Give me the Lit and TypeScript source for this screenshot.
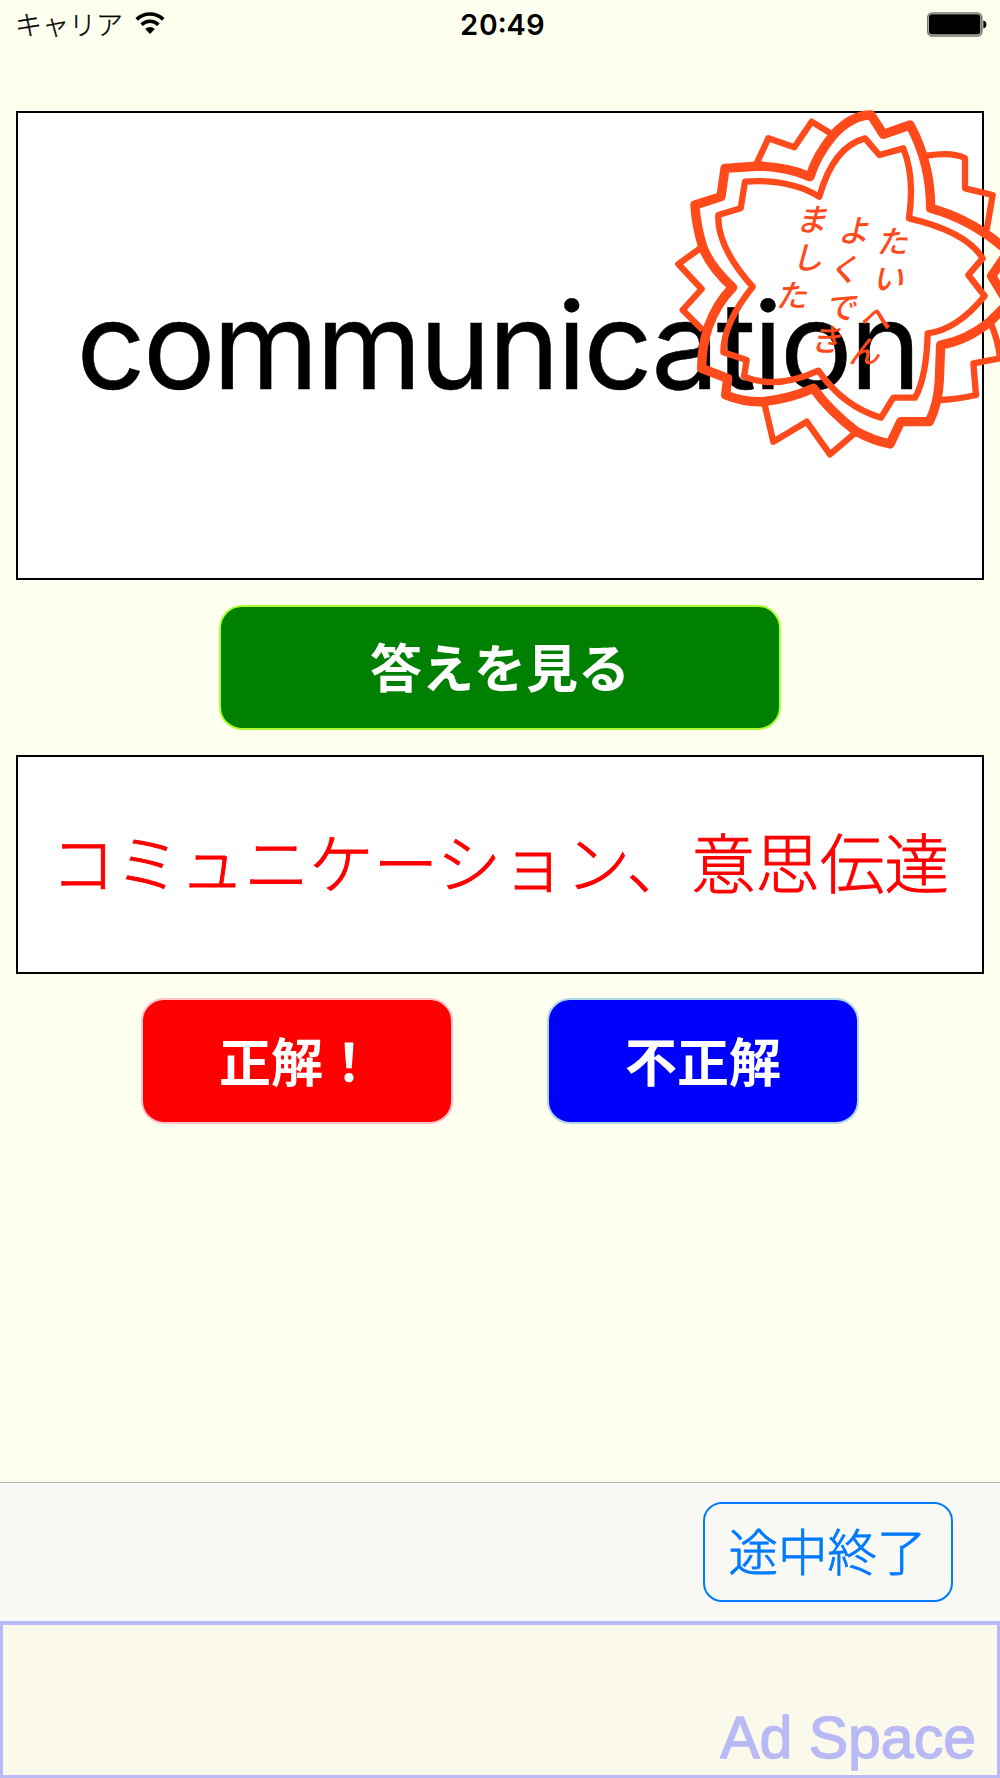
import { LitElement, css, html } from "lit";
import { customElement, property } from "lit/decorators.js";

@customElement("status-bar")
export class StatusBar extends LitElement {
  @property() carrier = "";
  @property() time = "";

  render() {
    return html`
      <div class="left">
        <span class="carrier">${this.carrier}</span>
        <svg class="wifi" width="30" height="22" viewBox="0 0 30 22">
          <path d="M1.7 7.4A19 19 0 0 1 28.3 7.4" />
          <path d="M6.6 12.7A12 12 0 0 1 23.4 12.7" />
          <path class="dot" d="M15 22L10.2 17A7 7 0 0 1 19.8 17Z" />
        </svg>
      </div>
      <div class="time">${this.time}</div>
      <div class="right">
        <svg width="60" height="26" viewBox="0 0 60 26">
          <rect class="shell" x="0.8" y="1" width="54" height="23" rx="4.5" />
          <rect x="2" y="2.2" width="51.4" height="20.4" rx="3" />
          <path d="M56.3 8.6A4 4 0 0 1 56.3 16.4Z" />
        </svg>
      </div>
    `;
  }

  static styles = css`
    :host {
      display: grid;
      grid-template-columns: 1fr auto 1fr;
      align-items: center;
      height: 50px;
      padding: 0 13px 0 15px;
    }
    svg {
      display: block;
    }
    .left {
      display: flex;
      align-items: center;
      gap: 12px;
    }
    .carrier {
      font-size: 27px;
      font-weight: 300;
      line-height: 48px;
      padding-bottom: 2px;
      -webkit-text-stroke: 0.3px #000;
    }
    .wifi {
      fill: none;
      stroke: #000;
      stroke-width: 3.6;
      margin-bottom: 4px;
    }
    .dot {
      fill: #000;
      stroke: none;
    }
    .time {
      font-family: Inter, sans-serif;
      font-size: 29px;
      font-weight: 600;
      line-height: 50px;
      letter-spacing: 0.5px;
      padding-left: 3px;
      font-feature-settings: "tnum", "case";
    }
    .right {
      justify-self: end;
    }
    .shell {
      fill: none;
      stroke: #77776f;
      stroke-width: 1.6;
    }
  `;
}

@customElement("sakura-stamp")
export class SakuraStamp extends LitElement {
  render() {
    return html`
      <svg width="340" height="370" viewBox="0 0 1020 1110">
        <path
          class="thick"
          d="M633 45Q575 45 520 105Q470 165 450 230Q390 203 300 198L195 205L183 290L105 315Q108 375 128 440Q150 500 218 562Q170 610 145 680Q125 740 125 805L203 835L197 885Q250 907 310 905Q390 897 460 865Q510 935 590 995Q640 1022 690 1032L722 965L808 965Q835 910 838 840L842 735Q920 722 990 665L1045 610L995 528L1045 455Q940 360 812 325Q812 190 750 75L670 103Z"
        />
        <path
          class="thin"
          d="M615 115Q520 140 478 290Q385 235 255 245L242 325L175 345Q170 440 278 560Q190 670 190 757L260 780L252 830Q350 870 475 812Q550 920 663 953L700 893L765 893Q800 830 803 700Q890 690 974 588L925 525L968 475Q920 395 747 355Q765 230 730 145L658 165Z"
        />
        <path class="thin" d="M290 190L325 115L403 142L455 65L520 105" />
        <path class="thin" d="M800 167Q880 155 915 175L915 265L998 285L980 390" />
        <path class="thin" d="M128 440L55 492L125 567L68 630L128 690" />
        <path class="thin" d="M312 905L340 1025L440 965L510 1063L590 995" />
        <path class="thin" d="M838 900Q900 897 948 885L940 790L1020 775Q1015 720 990 665" />
        <text x="695 683 643 612" y="460 570 690 790">たいへん</text>
        <text x="580 550 540 497" y="427 542 657 752">よくでき</text>
        <text x="453 441 393" y="394 507 622">ました</text>
      </svg>
    `;
  }

  static styles = css`
    :host {
      display: block;
    }
    svg {
      display: block;
    }
    path {
      fill: none;
      stroke: #ff4a1c;
      stroke-linejoin: round;
    }
    .thick {
      stroke-width: 28;
    }
    .thin {
      stroke-width: 19;
    }
    text {
      fill: #ff4a1c;
      font-size: 94px;
      font-style: italic;
      font-weight: 500;
      text-anchor: middle;
    }
  `;
}

@customElement("app-root")
export class AppRoot extends LitElement {
  render() {
    return html`
      <status-bar carrier="キャリア" time="20:49"></status-bar>
      <main>
        <section class="card question">
          <span class="word">communication</span>
          <sakura-stamp class="stamp"></sakura-stamp>
        </section>
        <button class="show">答えを見る</button>
        <section class="card answer">コミュニケーション、意思伝達</section>
        <div class="judge">
          <button class="correct">正解！</button>
          <button class="wrong">不正解</button>
        </div>
      </main>
      <footer class="toolbar">
        <button class="quit">途中終了</button>
      </footer>
      <div class="ad">Ad Space</div>
    `;
  }

  static styles = css`
    :host {
      display: flex;
      flex-direction: column;
      box-sizing: border-box;
      width: 1000px;
      height: 1778px;
      overflow: hidden;
      background: #fffff0;
      color: #000;
      font-family: "Noto Sans CJK JP", sans-serif;
    }
    * {
      box-sizing: border-box;
    }
    button {
      font: inherit;
      padding: 0;
      margin: 0;
    }
    main {
      flex: 1;
      display: flex;
      flex-direction: column;
      align-items: center;
      padding: 61px 15px 0;
    }
    .card {
      display: flex;
      align-items: center;
      justify-content: center;
      width: 968px;
      border: 2.5px solid #000;
      background: #fff;
      white-space: nowrap;
    }
    .question {
      position: relative;
      height: 469px;
    }
    .word {
      font-family: Inter, sans-serif;
      font-size: 121px;
      line-height: 1;
      letter-spacing: -2.7px;
      padding-right: 5px;
      -webkit-text-stroke: 0.5px #000;
    }
    .stamp {
      position: absolute;
      top: -13px;
      left: 642px;
    }
    .show,
    .correct,
    .wrong {
      height: 125px;
      padding-bottom: 4px;
      border: 2px solid;
      border-radius: 23px;
      color: #fff;
      font-size: 52px;
      font-weight: 700;
    }
    .show {
      width: 562px;
      margin: 25px 0 25px;
      background: #008000;
      border-color: #adff2f;
    }
    .answer {
      height: 219px;
      padding-bottom: 9px;
      color: #f00;
      font-size: 64.5px;
      font-weight: 300;
      -webkit-text-stroke: 0.9px #f00;
    }
    .judge {
      display: flex;
      gap: 94px;
      margin-top: 24px;
    }
    .correct,
    .wrong {
      width: 312px;
      height: 126px;
    }
    .correct {
      background: #f00;
      border-color: #ffc0cb;
    }
    .wrong {
      background: #00f;
      border-color: #add8e6;
    }
    .toolbar {
      display: flex;
      justify-content: flex-end;
      height: 139px;
      padding: 19px 47px 0;
      background: #f8f8f4;
      border-top: 1px solid #b9b9b3;
    }
    .quit {
      width: 250px;
      height: 100px;
      padding: 0 1px 5px 0;
      border: 2px solid #007aff;
      border-radius: 19px;
      background: none;
      color: #007aff;
      font-size: 49.5px;
      font-weight: 300;
      -webkit-text-stroke: 0.8px #007aff;
    }
    .ad {
      display: flex;
      align-items: flex-end;
      justify-content: flex-end;
      height: 157px;
      padding: 0 21px 3px;
      border: 3px solid #b9b9f5;
      border-top-width: 4px;
      background: #fbf9eb;
      color: #b9b9f5;
      font-family: "Liberation Sans", sans-serif;
      font-size: 59px;
      line-height: 68px;
      -webkit-text-stroke: 1.4px #b9b9f5;
    }
  `;
}
